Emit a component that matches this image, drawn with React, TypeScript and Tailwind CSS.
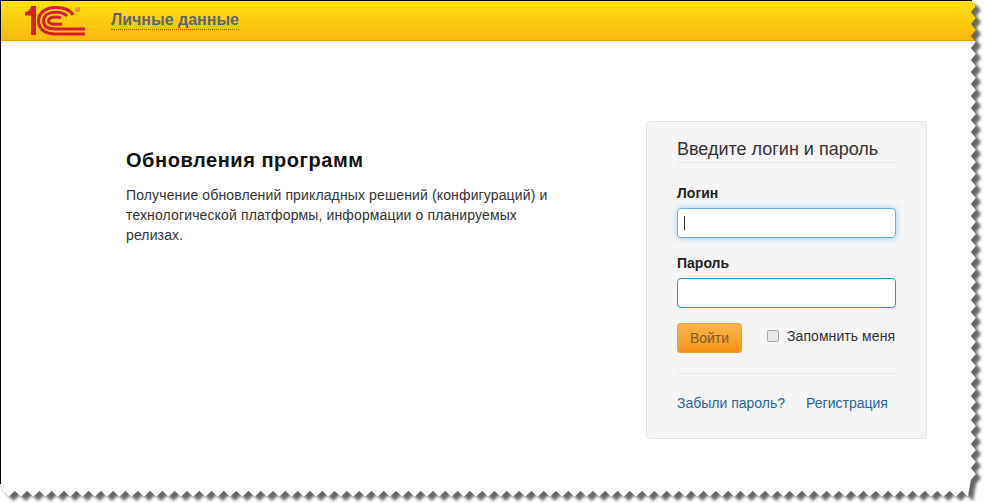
const buildEdge = () => {
  // torn paper outline: top right corner, down the right side, back along the bottom
  const right: string[] = [];
  for (let i = 0, y = 6; y < 484; i++, y += 6) {
    right.push(`${i % 2 === 0 ? 976 : 971},${y}`);
  }
  const bottom: string[] = [];
  for (let i = 0, x = 968; x > 2; i++, x -= 6.15) {
    bottom.push(`${x.toFixed(1)},${i % 2 === 0 ? 497 : 491}`);
  }
  return `M0,0 L970,0 L${right.join(" L")} L${bottom.join(" L")} L0,484 Z`;
};

const edge = buildEdge();

const TornEdge = () => (
  <svg className="absolute inset-0 pointer-events-none" width="984" height="503" viewBox="0 0 984 503">
    <defs>
      <filter id="blur" x="-5%" y="-5%" width="110%" height="110%">
        <feGaussianBlur stdDeviation="1.8" />
      </filter>
      <clipPath id="outside">
        <path clipRule="evenodd" d={`M0,0 H984 V503 H0 Z ${edge}`} />
      </clipPath>
    </defs>
    <path fillRule="evenodd" fill="#fff" d={`M0,0 H984 V503 H0 Z ${edge}`} />
    <g clipPath="url(#outside)">
      <path d={edge} fill="#666" filter="url(#blur)" transform="translate(5 4)" />
    </g>
    <path d={edge} fill="none" stroke="#333" strokeWidth="0.5" opacity="0.4" />
    <rect x="0" y="0" width="972" height="1" fill="#000" />
    <rect x="0" y="0" width="1" height="484" fill="#000" />
  </svg>
);

const Logo = () => (
  <svg width="62" height="31" viewBox="0 0 62 31" fill="none" className="shrink-0">
    <path d="M0 7 C3 7 5 5 6 1 H11 V30 H6 V10.5 H0 Z" fill="#d4202c" />
    <g stroke="#d4202c" strokeWidth="3">
      <path d="M48 10 C45 4.5 39 2.5 31 2.5 C20 2.5 13.5 8 13.5 16 C13.5 24 20 29 31 29 H60" />
      <path d="M42 11 C39.5 8.5 36 7.2 31 7.2 C23.5 7.2 18.5 10.5 18.5 16 C18.5 21.5 23.5 24 31 24 H60" />
      <path d="M36 13 C34.5 12.3 33 12 31 12 C26.5 12 23.5 13.5 23.5 16 C23.5 18.5 26.5 19.2 31 19.2 H37" />
    </g>
    <circle cx="53" cy="4.5" r="2.4" fill="#ee8f2a" />
  </svg>
);

export default function App() {
  return (
    <div className="relative w-[984px] h-[503px] overflow-hidden bg-white font-['Liberation_Sans',Arial,sans-serif] text-[14px] text-[#333]">
      <header className="h-[41px] flex items-center pl-[25px] bg-gradient-to-b from-[#ffe10f] to-[#fbb90f] border-b border-[#dfa20f]">
        <Logo />
        <a className="ml-[24px] font-bold text-[16px] leading-[19px] text-[#5c6472] border-b border-dotted border-[#5c6472]">
          Личные данные
        </a>
      </header>
      <div className="h-[6px] bg-gradient-to-b from-[#f1f3f4] to-white" />

      <main className="flex items-start pl-[126px] pr-[57px] pt-[74px]">
        <section className="w-[430px] pt-[27px]">
          <h1 className="text-[20px] leading-[24px] font-bold text-[#111] tracking-[0.55px]">Обновления программ</h1>
          <p className="mt-[13px] leading-[20px] tracking-[0.13px]">
            Получение обновлений прикладных решений (конфигураций) и технологической платформы, информации о планируемых
            релизах.
          </p>
        </section>

        <form className="ml-auto w-[281px] h-[318px] bg-[#f5f5f5] border border-[#e3e3e3] rounded pt-[15px] px-[30px]">
          <h2 className="text-[18px] leading-[24px] text-[#333] pb-[1px] border-b border-[#e5e5e5]">Введите логин и пароль</h2>

          <label className="block mt-[20px] font-bold leading-[20px] text-[#222]">Логин</label>
          <div className="relative mt-[5px]">
            <input className="block w-full h-[30px] bg-white rounded border border-[#66afe9] shadow-[0_0_6px_rgba(102,175,233,0.6)] outline-none" />
            <span className="absolute left-[7px] top-[8px] w-px h-[14px] bg-[#333]" />
          </div>

          <label className="block mt-[15px] font-bold leading-[20px] text-[#222]">Пароль</label>
          <input
            type="password"
            className="block w-full h-[30px] mt-[5px] bg-white rounded border border-[#1c9ad6] outline-none"
          />

          <div className="flex items-start mt-[15px]">
            <button
              type="button"
              className="w-[65px] h-[30px] rounded-[3px] border border-[#e8a33a] bg-gradient-to-b from-[#fbb54a] to-[#f6930f] text-[#7a5a2a] text-[14px]"
            >
              Войти
            </button>
            <span className="ml-[25px] mt-[7px] w-[12px] h-[12px] rounded-[2px] border border-[#aaa] bg-[#e8e8e8]" />
            <span className="ml-[8px] mt-[3px] leading-[20px] whitespace-nowrap tracking-[0.07px]">Запомнить меня</span>
          </div>

          <div className="mt-[20px] border-t border-[#e5e5e5] pt-[19px] flex gap-[21px] leading-[20px] text-[#2a6496]">
            <a>Забыли пароль?</a>
            <a>Регистрация</a>
          </div>
        </form>
      </main>

      <TornEdge />
    </div>
  );
}
